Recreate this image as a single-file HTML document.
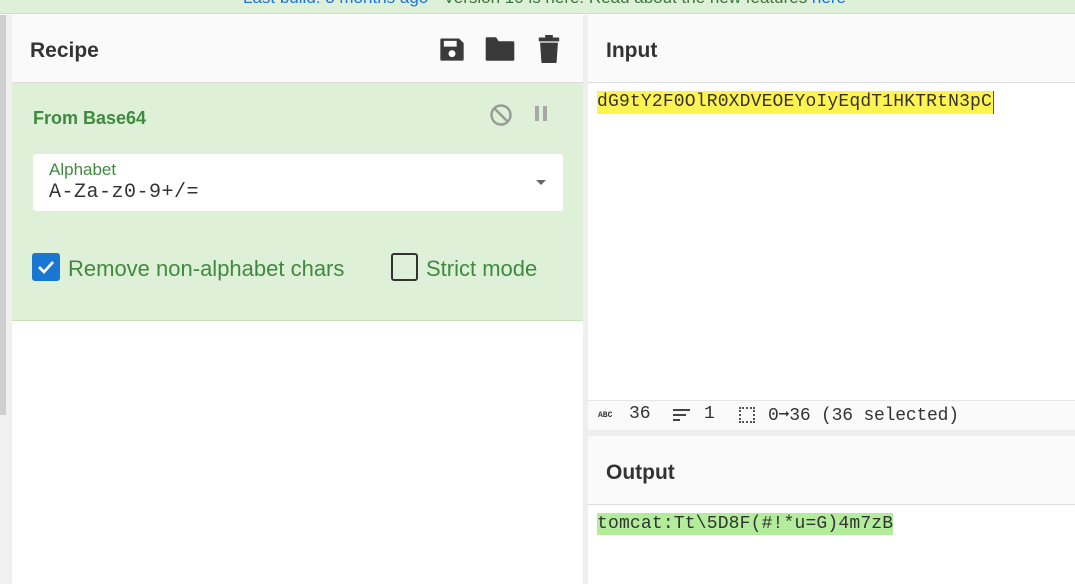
<!DOCTYPE html>
<html><head><style>
*{margin:0;padding:0;box-sizing:border-box}
body{width:1075px;height:584px;overflow:hidden;background:#fff;font-family:"Liberation Sans",sans-serif;position:relative}
.abs{position:absolute}
.mono{font-family:"Liberation Mono",monospace}
</style></head><body>
<div class="abs" style="left:0;top:0;width:1075px;height:14px;background:#dff0d8;border-bottom:1px solid #d0dcc8;overflow:hidden">
<div class="abs" style="left:243px;top:-12px;font-size:17px;color:#1a73e8;white-space:nowrap">Last build: 3 months ago <span style="color:#3c763d">- Version 10 is here! Read about the new features</span> here</div>
</div>
<div class="abs" style="left:0;top:15px;width:12px;height:569px;background:#f0f0f0"></div>
<div class="abs" style="left:0;top:15px;width:6px;height:400px;background:#cfcfcf"></div>
<!-- recipe -->
<div class="abs" style="left:12px;top:15px;width:571px;height:68px;background:#fafafa;border-bottom:1px solid #ddd"></div>
<div class="abs" style="left:30px;top:39px;font-size:21px;font-weight:bold;color:#333">Recipe</div>
<svg class="abs" style="left:437px;top:35px" width="30" height="28" viewBox="0 0 24 24"><path fill="#3a3a3a" d="M3 3h15l4 4v14a1 1 0 0 1-1 1H3a1 1 0 0 1-1-1V4a1 1 0 0 1 1-1zm2 2v5h11V5zm7 8a3 3 0 1 0 0 6a3 3 0 0 0 0-6z"/></svg>
<svg class="abs" style="left:484px;top:36px" width="32" height="26" viewBox="0 0 24 20"><path fill="#3a3a3a" d="M1 2a1 1 0 0 1 1-1h7l2 3h11a1 1 0 0 1 1 1v13a1 1 0 0 1-1 1H2a1 1 0 0 1-1-1z"/></svg>
<svg class="abs" style="left:537px;top:35px" width="24" height="28" viewBox="0 0 18 22"><path fill="#3a3a3a" d="M6 0h6v2h5v3H1V2h5zM2 6h14l-1 15a1 1 0 0 1-1 1H4a1 1 0 0 1-1-1z"/></svg>
<div class="abs" style="left:12px;top:83px;width:571px;height:238px;background:#dff0d8;border-bottom:1px solid #c8e0c0"></div>
<div class="abs" style="left:33px;top:108px;font-size:18px;font-weight:bold;color:#3f8a3f">From Base64</div>
<svg class="abs" style="left:489px;top:103px" width="24" height="24" viewBox="0 0 24 24"><circle cx="12" cy="12" r="9.5" fill="none" stroke="#9a9a9a" stroke-width="2.4"/><path d="M5.5 5.5l13 13" stroke="#9a9a9a" stroke-width="2.4"/></svg>
<div class="abs" style="left:535px;top:106px;width:4px;height:15px;background:#a8a8a8"></div>
<div class="abs" style="left:543px;top:106px;width:4px;height:15px;background:#a8a8a8"></div>
<div class="abs" style="left:33px;top:154px;width:530px;height:57px;background:#fff;border-radius:3px"></div>
<div class="abs" style="left:49px;top:160px;font-size:17px;color:#3f8a3f">Alphabet</div>
<div class="abs mono" style="left:49px;top:181px;font-size:20px;letter-spacing:0.5px;color:#333">A-Za-z0-9+/=</div>
<div class="abs" style="left:536px;top:180px;width:0;height:0;border-left:5px solid transparent;border-right:5px solid transparent;border-top:5px solid #666"></div>
<div class="abs" style="left:32px;top:253px;width:28px;height:28px;background:#1976d2;border-radius:3px"></div>
<svg class="abs" style="left:32px;top:253px" width="28" height="28" viewBox="0 0 28 28"><path d="M7 14l5 5l9-10" fill="none" stroke="#fff" stroke-width="2.8"/></svg>
<div class="abs" style="left:68px;top:256px;font-size:22px;color:#3f8a3f">Remove non-alphabet chars</div>
<div class="abs" style="left:391px;top:253px;width:27px;height:28px;border:2px solid #333;border-radius:3px"></div>
<div class="abs" style="left:426px;top:256px;font-size:22px;color:#3f8a3f">Strict mode</div>
<!-- divider -->
<div class="abs" style="left:583px;top:15px;width:5px;height:569px;background:#eee"></div>
<!-- input -->
<div class="abs" style="left:588px;top:15px;width:487px;height:68px;background:#fafafa;border-bottom:1px solid #ddd"></div>
<div class="abs" style="left:606px;top:39px;font-size:21px;font-weight:bold;color:#333">Input</div>
<div class="abs mono" style="left:597px;top:91px;height:23px;line-height:23px;font-size:18px;letter-spacing:0.17px;background:#fff44f;color:#333;padding-right:1px;border-right:1px solid #555">dG9tY2F0OlR0XDVEOEYoIyEqdT1HKTRtN3pC</div>
<div class="abs" style="left:588px;top:400px;width:487px;height:30px;background:#fafafa;border-top:1px solid #e5e5e5"></div>
<div class="abs mono" style="left:598px;top:411px;font-size:8px;font-weight:bold;color:#333">ABC</div>
<div class="abs mono" style="left:629px;top:404px;font-size:18px;color:#333">36</div>
<div class="abs" style="left:673px;top:409px;width:17px;height:2px;background:#444"></div>
<div class="abs" style="left:673px;top:414px;width:13px;height:2px;background:#444"></div>
<div class="abs" style="left:673px;top:419px;width:7px;height:2px;background:#444"></div>
<div class="abs mono" style="left:704px;top:404px;font-size:18px;color:#333">1</div>
<div class="abs" style="left:739px;top:407px;width:16px;height:16px;border:2px dotted #555"></div>
<div class="abs mono" style="left:768px;top:404px;font-size:18px;letter-spacing:-0.2px;color:#333">0➞36 (36 selected)</div>
<div class="abs" style="left:588px;top:430px;width:487px;height:6px;background:#eee"></div>
<div class="abs" style="left:588px;top:436px;width:487px;height:69px;background:#fafafa;border-bottom:1px solid #ddd"></div>
<div class="abs" style="left:606px;top:461px;font-size:21px;font-weight:bold;color:#333">Output</div>
<div class="abs mono" style="left:597px;top:513px;height:22px;line-height:22px;font-size:18px;letter-spacing:0.17px;background:#b3ec9b;color:#333">tomcat:Tt\5D8F(#!*u=G)4m7zB</div>
</body></html>
